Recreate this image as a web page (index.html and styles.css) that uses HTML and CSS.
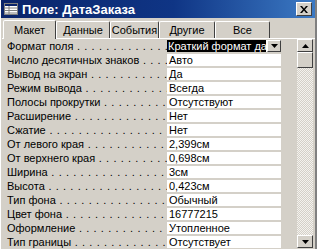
FILE: index.html
```html
<!DOCTYPE html>
<html lang="ru">
<head>
<meta charset="utf-8">
<link rel="stylesheet" href="styles.css">
</head>
<body>
<div class="win">
  <div class="title">
    <svg class="ticon" width="14" height="12" viewBox="0 0 14 12">
      <rect x="0.5" y="0.5" width="13" height="11" fill="#fff" stroke="#808080"/>
      <rect x="1" y="1" width="12" height="2" fill="#0a246a"/>
      <line x1="1" y1="5" x2="13" y2="5" stroke="#808080"/>
      <line x1="1" y1="7.5" x2="13" y2="7.5" stroke="#808080"/>
      <line x1="1" y1="10" x2="13" y2="10" stroke="#808080"/>
      <line x1="5" y1="3" x2="5" y2="11" stroke="#808080"/>
    </svg>
    <span class="ttext">Поле: ДатаЗаказа</span>
    <span class="close">
      <svg width="8" height="7" viewBox="0 0 8 7"><path d="M0 0h2l2 2.5L6 0h2L5 3.5 8 7H6L4 4.5 2 7H0l3-3.5z" fill="#000"/></svg>
    </span>
  </div>
  <div class="tabs">
    <div class="tab t1 active">Макет</div>
    <div class="tab t2">Данные</div>
    <div class="tab t3">События</div>
    <div class="tab t4">Другие</div>
    <div class="tab t5">Все</div>
  </div>
  <div class="page">
    <div class="list">
      <div class="row"><span class="lbl">Формат поля</span><span class="val sel"><span class="seltext">Краткий формат даты</span><span class="dd"><svg width="7" height="4" viewBox="0 0 7 4"><path d="M0 0h7L3.5 4z" fill="#000"/></svg></span></span></div>
      <div class="row"><span class="lbl">Число десятичных знаков</span><span class="val">Авто</span></div>
      <div class="row"><span class="lbl">Вывод на экран</span><span class="val">Да</span></div>
      <div class="row"><span class="lbl">Режим вывода</span><span class="val">Всегда</span></div>
      <div class="row"><span class="lbl">Полосы прокрутки</span><span class="val">Отсутствуют</span></div>
      <div class="row"><span class="lbl">Расширение</span><span class="val">Нет</span></div>
      <div class="row"><span class="lbl">Сжатие</span><span class="val">Нет</span></div>
      <div class="row"><span class="lbl">От левого края</span><span class="val">2,399см</span></div>
      <div class="row"><span class="lbl">От верхнего края</span><span class="val">0,698см</span></div>
      <div class="row"><span class="lbl">Ширина</span><span class="val">3см</span></div>
      <div class="row"><span class="lbl">Высота</span><span class="val">0,423см</span></div>
      <div class="row"><span class="lbl">Тип фона</span><span class="val">Обычный</span></div>
      <div class="row"><span class="lbl">Цвет фона</span><span class="val">16777215</span></div>
      <div class="row"><span class="lbl">Оформление</span><span class="val">Утопленное</span></div>
      <div class="row"><span class="lbl">Тип границы</span><span class="val">Отсутствует</span></div>
    </div>
    <div class="scroll">
      <div class="sbtn"><svg width="7" height="4" viewBox="0 0 7 4"><path d="M3.5 0L7 4H0z" fill="#000"/></svg></div>
      <div class="thumb"></div>
      <div class="track"></div>
      <div class="sbtn"><svg width="7" height="4" viewBox="0 0 7 4"><path d="M0 0h7L3.5 4z" fill="#000"/></svg></div>
    </div>
  </div>
</div>
</body>
</html>
```
FILE: styles.css
```css
html, body {
  margin: 0;
  padding: 0;
  background: #d4d0c8;
}
.win {
  width: 317px;
  height: 249px;
  overflow: hidden;
  background: #d4d0c8;
  font-family: "Liberation Sans", Arial, sans-serif;
  font-size: 11px;
  color: #000;
  box-sizing: border-box;
  border-left: 1px solid #fff;
  border-right: 2px solid #808080;
}
.title {
  height: 18px;
  display: flex;
  align-items: center;
  background: linear-gradient(to right, #0a246a 0%, #0f3585 55%, #3c7ac4 100%);
  color: #fff;
  padding: 0 3px 0 3px;
}
.ticon {
  flex: none;
  margin-right: 4px;
}
.ttext {
  font-weight: bold;
  font-size: 13px;
  flex: 1;
  white-space: nowrap;
}
.close {
  width: 16px;
  height: 14px;
  background: #d4d0c8;
  box-sizing: border-box;
  border: 1px solid;
  border-color: #fff #404040 #404040 #fff;
  display: flex;
  align-items: center;
  justify-content: center;
}
.tabs {
  display: flex;
  align-items: flex-end;
  height: 20px;
  padding-left: 2px;
}
.tab {
  height: 17px;
  box-sizing: border-box;
  border: 1px solid;
  border-bottom: none;
  border-color: #fff #404040 transparent #fff;
  border-radius: 2px 2px 0 0;
  padding: 2px 0 0 0;
  text-align: center;
  white-space: nowrap;
  flex: none;
}
.t1 { width: 53px; }
.t2 { width: 54px; }
.t3 { width: 49px; }
.t4 { width: 56px; }
.t5 { width: 55px; }
.tab.active {
  height: 19px;
  padding-top: 3px;
  position: relative;
  z-index: 1;
  background: #d4d0c8;
  margin-bottom: -1px;
}
.page {
  display: grid;
  grid-template-columns: 295px 16px;
  border-top: 1px solid #fff;
  margin-left: 1px;
  height: 210px;
  box-sizing: border-box;
}
.list {
  padding-left: 1px;
  overflow: hidden;
}
.row {
  display: flex;
  height: 14px;
  align-items: center;
}
.lbl {
  width: 160px;
  padding-left: 4px;
  overflow: hidden;
  white-space: nowrap;
  flex: none;
}
.lbl::after {
  content: " . . . . . . . . . . . . . . . . . . . . . . . . . . . . . . . . . . . . . . . . . . . . . . . . . . . . . . . . . . . . . .";
  letter-spacing: 0.6px;
}
.val {
  width: 114px;
  height: 12px;
  line-height: 12px;
  background: #fff;
  padding-left: 2px;
  box-sizing: border-box;
  white-space: nowrap;
  overflow: hidden;
  flex: none;
}
.val.sel {
  display: flex;
  padding-left: 0;
}
.seltext {
  background: #000;
  color: #fff;
  width: 98px;
  overflow: hidden;
  padding-left: 1px;
  flex: none;
}
.dd {
  width: 14px;
  height: 12px;
  margin-left: 1px;
  box-sizing: border-box;
  background: #d4d0c8;
  border: 1px solid;
  border-color: #fff #404040 #404040 #fff;
  display: flex;
  align-items: center;
  justify-content: center;
  flex: none;
}
.scroll {
  display: flex;
  flex-direction: column;
  height: 209px;
  background-color: #ece9e2;
  background-image: repeating-conic-gradient(#d4d0c8 0 25%, #f4f2ee 0 50%);
  background-size: 2px 2px;
}
.sbtn, .thumb {
  height: 13px;
  box-sizing: border-box;
  background: #d4d0c8;
  border: 1px solid;
  border-color: #fff #404040 #404040 #fff;
  display: flex;
  align-items: center;
  justify-content: center;
  flex: none;
}
.thumb {
  height: 16px;
}
.track {
  flex: 1;
}
```
